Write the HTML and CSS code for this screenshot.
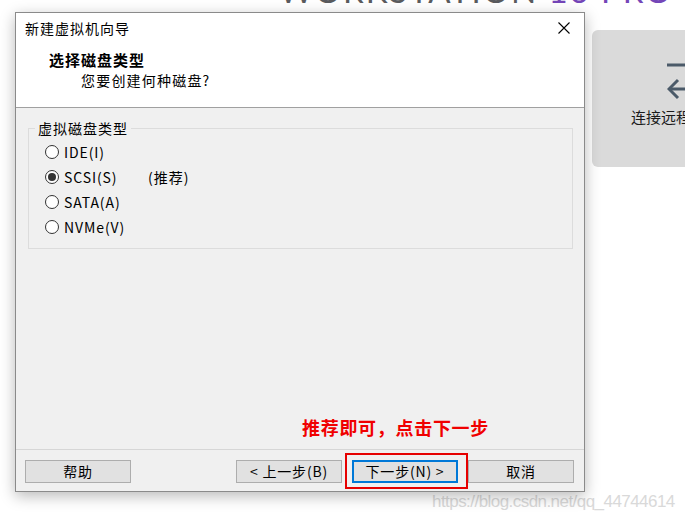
FILE: index.html
```html
<!DOCTYPE html>
<html lang="zh-CN">
<head>
<meta charset="utf-8">
<title>新建虚拟机向导</title>
<link rel="stylesheet" href="styles.css">
</head>
<body>
<div class="app">
  <div class="brand">WORKSTATION <span class="brand-ver">16 PRO</span></div>
  <div class="card">
    <svg class="card-icon" width="30" height="40" viewBox="0 0 30 40">
      <line x1="0" y1="5" x2="30" y2="5" stroke="#4b5a69" stroke-width="3"/>
      <polyline points="11,20 2,29 11,38" fill="none" stroke="#4b5a69" stroke-width="3" stroke-linejoin="miter"/>
      <line x1="2" y1="29" x2="30" y2="29" stroke="#4b5a69" stroke-width="3"/>
    </svg>
    <div class="card-text">连接远程服务器</div>
  </div>
  <div class="watermark">https://blog.csdn.net/qq_44744614</div>

  <div class="dialog">
    <div class="head">
      <div class="titlebar">
        <span class="title">新建虚拟机向导</span>
        <svg class="close" width="12" height="12" viewBox="0 0 12 12">
          <path d="M0.5 0.5 L11.5 11.5 M11.5 0.5 L0.5 11.5" stroke="#000" stroke-width="1.1" fill="none"/>
        </svg>
      </div>
      <div class="heading">选择磁盘类型</div>
      <div class="sub">您要创建何种磁盘?</div>
    </div>
    <div class="body">
      <fieldset class="group">
        <legend>虚拟磁盘类型</legend>
        <div class="options">
          <div class="row"><span class="radio"></span><span class="lbl">IDE(I)</span></div>
          <div class="row"><span class="radio checked"></span><span class="lbl">SCSI(S)</span><span class="rec">(推荐)</span></div>
          <div class="row"><span class="radio"></span><span class="lbl">SATA(A)</span></div>
          <div class="row"><span class="radio"></span><span class="lbl">NVMe(V)</span></div>
        </div>
      </fieldset>
      <div class="note">推荐即可，点击下一步</div>
    </div>
    <div class="footer">
      <button class="btn">帮助</button>
      <div class="btn-group">
        <button class="btn">&lt; 上一步(B)</button>
        <button class="btn default">下一步(N) &gt;</button>
        <button class="btn">取消</button>
      </div>
    </div>
    <div class="redbox"></div>
  </div>
</div>
</body>
</html>
```
FILE: styles.css
```css
html, body {
  margin: 0;
  padding: 0;
  background: #ffffff;
  overflow: hidden;
}
.app {
  position: relative;
  width: 685px;
  height: 521px;
  overflow: hidden;
  font-family: "Noto Sans CJK SC", "Noto Sans", sans-serif;
}
.brand {
  position: absolute;
  left: 279px;
  top: -26px;
  font-family: Lato, "Noto Sans", sans-serif;
  font-size: 33px;
  line-height: 33px;
  letter-spacing: 1.9px;
  color: #5a5b5e;
  white-space: nowrap;
}
.brand-ver {
  color: #7446b8;
}
.card {
  position: absolute;
  left: 592px;
  top: 30px;
  width: 130px;
  height: 137px;
  border-radius: 6px;
  background: #dadada;
  display: flex;
  flex-direction: column;
  align-items: flex-start;
}
.card-icon {
  margin: 30px 0 0 75px;
}
.card-text {
  margin: 8px 0 0 39px;
  font-size: 15px;
  line-height: 18px;
  color: #1a1a1a;
  white-space: nowrap;
}
.watermark {
  position: absolute;
  left: 432px;
  top: 491px;
  font-family: "Liberation Sans Narrow", "Liberation Sans", sans-serif;
  font-size: 17px;
  line-height: 22px;
  color: #d9d9d9;
  letter-spacing: -0.55px;
  white-space: nowrap;
}
.dialog {
  position: absolute;
  left: 15px;
  top: 12px;
  width: 568px;
  height: 478px;
  border: 1px solid #8a8a8a;
  background: #f0f0f0;
  box-shadow: 0 4px 14px rgba(0, 0, 0, 0.28);
  display: flex;
  flex-direction: column;
  font-size: 14px;
  color: #000;
}
.head {
  height: 94px;
  background: #ffffff;
  border-bottom: 1px solid #a0a0a0;
  display: flex;
  flex-direction: column;
}
.titlebar {
  height: 30px;
  display: flex;
  align-items: center;
  justify-content: space-between;
  padding: 0 14px 0 9px;
}
.title {
  font-size: 14px;
  letter-spacing: 1px;
  line-height: 30px;
}
.close {
  display: block;
}
.heading {
  margin: 7px 0 0 33px;
  font-size: 15px;
  font-weight: bold;
  letter-spacing: 1px;
  line-height: 20px;
}
.sub {
  margin-left: 65px;
  font-size: 14px;
  letter-spacing: 1.2px;
  line-height: 20px;
}
.body {
  position: relative;
  flex: 1;
  padding: 11px 11px 0 12px;
}
.group {
  margin: 0;
  padding: 0;
  border: 1px solid #dcdcdc;
  min-width: 0;
}
.group legend {
  margin-left: 6px;
  padding: 0 3px;
  font-size: 14px;
  letter-spacing: 1px;
  line-height: 18px;
  color: #000;
}
.options {
  padding: 2px 0 9px 16px;
}
.row {
  height: 25px;
  display: flex;
  align-items: center;
}
.radio {
  width: 12px;
  height: 12px;
  border: 1px solid #333;
  border-radius: 50%;
  background: #fff;
  display: flex;
  align-items: center;
  justify-content: center;
  flex: none;
}
.radio.checked::after {
  content: "";
  width: 8px;
  height: 8px;
  border-radius: 50%;
  background: #333;
}
.lbl {
  margin-left: 5px;
  width: 84px;
  font-size: 14px;
  letter-spacing: 0.9px;
}
.rec {
  font-size: 14px;
  letter-spacing: 1px;
}
.note {
  position: absolute;
  left: 286px;
  top: 309px;
  font-size: 18px;
  line-height: 20px;
  font-weight: bold;
  color: #f00000;
  letter-spacing: 0.7px;
  white-space: nowrap;
}
.footer {
  height: 42px;
  border-top: 1px solid #d6d6d6;
  display: flex;
  align-items: flex-start;
  justify-content: space-between;
  padding: 10px 10px 0 9px;
  box-sizing: border-box;
}
.btn-group {
  display: flex;
  gap: 10px;
}
.btn {
  width: 106px;
  height: 23px;
  margin: 0;
  padding: 0;
  box-sizing: border-box;
  border: 1px solid #adadad;
  background: #e1e1e1;
  font-family: "Noto Sans CJK SC", "Noto Sans", sans-serif;
  font-size: 14px;
  line-height: 19px;
  color: #000;
  letter-spacing: 0.8px;
}
.btn.default {
  border: 2px solid #0078d7;
}
.redbox {
  position: absolute;
  left: 329px;
  top: 440px;
  width: 123px;
  height: 36px;
  box-sizing: border-box;
  border: 2px solid #e60000;
}
```
